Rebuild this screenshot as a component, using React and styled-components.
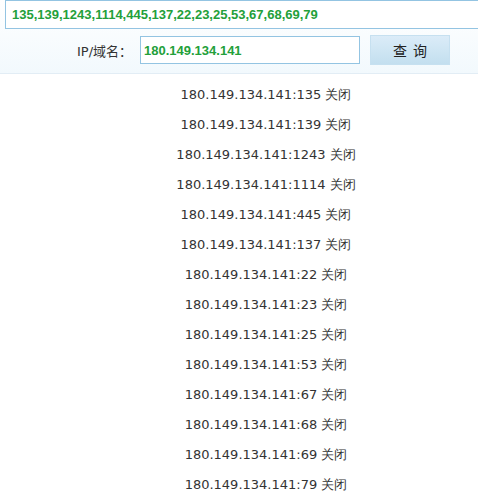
import styled, { createGlobalStyle } from "styled-components";

const GlobalStyle = createGlobalStyle`
  html, body {
    margin: 0;
    padding: 0;
    background: #fff;
    overflow: hidden;
  }
`;

const Page = styled.div`
  width: 478px;
  height: 492px;
  overflow: hidden;
  font-family: "DejaVu Sans", Verdana, sans-serif;
  font-size: 13px;
  color: #333;
`;

const Header = styled.div`
  height: 73px;
  border-bottom: 1px solid #e2edf5;
  background: linear-gradient(#ffffff, #f2f9fd);
  display: flex;
  flex-direction: column;
  gap: 6px;
  overflow: hidden;
`;

const PortsInput = styled.input`
  box-sizing: border-box;
  margin-left: 5px;
  width: 520px;
  height: 29px;
  padding: 0 6px;
  border: 1px solid #93c4e2;
  background: #fff;
  font-family: "Liberation Sans", Arial, sans-serif;
  font-size: 13px;
  font-weight: bold;
  color: #23a03a;
  outline: none;
`;

const QueryRow = styled.div`
  display: flex;
  align-items: center;
  padding-left: 77px;
`;

const Label = styled.label`
  font-family: "DejaVu Sans", "Noto Sans CJK SC", sans-serif;
  font-size: 13px;
  color: #333;
  width: 63px;
`;

const HostInput = styled.input`
  box-sizing: border-box;
  width: 220px;
  height: 28px;
  padding: 0 3px;
  border: 1px solid #93c4e2;
  background: #fff;
  font-family: "Liberation Sans", Arial, sans-serif;
  font-size: 13px;
  font-weight: bold;
  color: #23a03a;
  outline: none;
`;

const QueryButton = styled.button`
  box-sizing: border-box;
  margin-left: 10px;
  width: 80px;
  height: 30px;
  border: 1px solid #c6e0f0;
  background: linear-gradient(#dbecf8, #c3dfef);
  font-family: "Noto Sans CJK SC", sans-serif;
  font-size: 14px;
  letter-spacing: 6px;
  padding: 0 0 0 6px;
  color: #222;
  cursor: pointer;
`;

const Results = styled.ul`
  list-style: none;
  margin: 0;
  padding: 6px 0 0 54px;
  text-align: center;
`;

const ResultRow = styled.li`
  height: 30px;
  line-height: 30px;
  white-space: nowrap;
`;

const host = "180.149.134.141";
const ports = [135, 139, 1243, 1114, 445, 137, 22, 23, 25, 53, 67, 68, 69, 79];

export default function App() {
  return (
    <Page>
      <GlobalStyle />
      <Header>
        <PortsInput defaultValue={ports.join(",")} />
        <QueryRow>
          <Label htmlFor="host">IP/域名：</Label>
          <HostInput id="host" defaultValue={host} />
          <QueryButton type="button">查询</QueryButton>
        </QueryRow>
      </Header>
      <Results>
        {ports.map((p) => (
          <ResultRow key={p}>
            {host}:{p} 关闭
          </ResultRow>
        ))}
      </Results>
    </Page>
  );
}
